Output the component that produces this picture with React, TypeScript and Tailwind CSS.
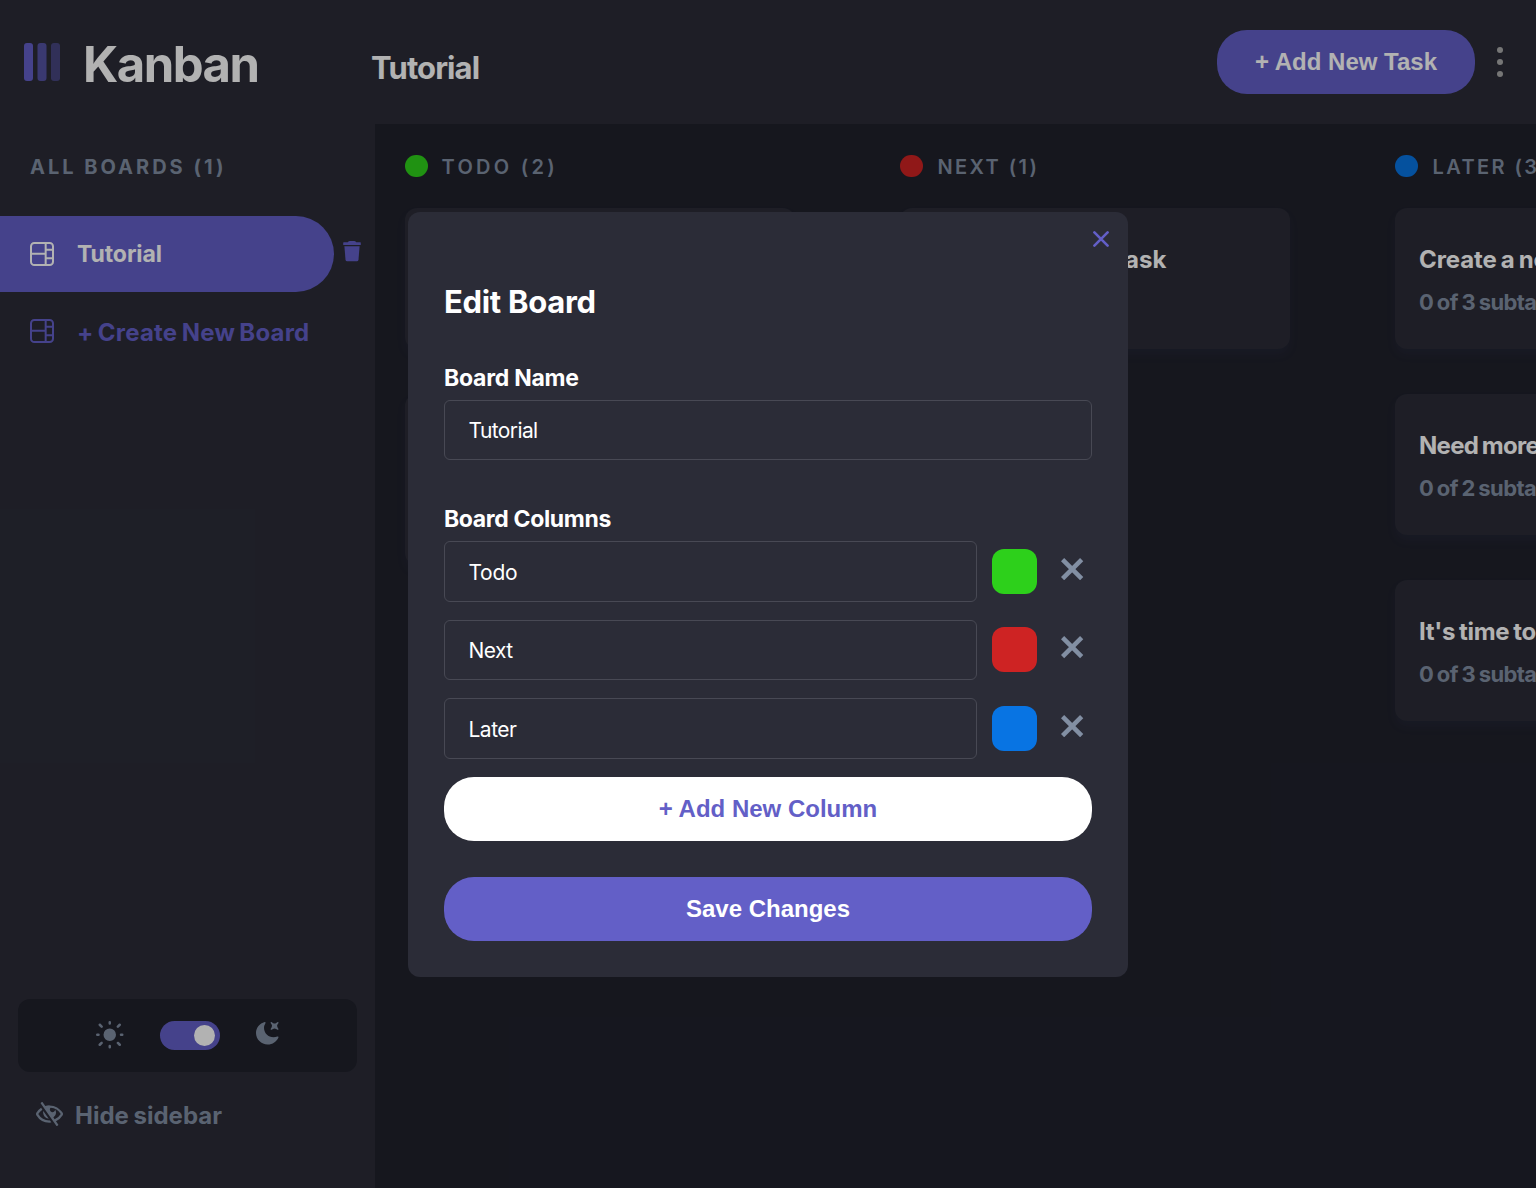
import type { ReactNode } from "react";

type Task = { title: string; subtasks: string; titleClass: string; tall?: boolean };
type Column = { name: string; nameClass: string; dot: string; tasks: Task[] };

const columns: Column[] = [
  {
    name: "TODO (2)",
    nameClass: "-ml-px tracking-[3.3px]",
    dot: "bg-[#2fd11a]",
    tasks: [
      { title: "Drag this task over", subtasks: "0 of 1 subtasks", titleClass: "" },
      { title: "Drag tasks to reorder them or change status", subtasks: "0 of 2 subtasks", titleClass: "", tall: true },
    ],
  },
  {
    name: "NEXT (1)",
    nameClass: "tracking-[2.4px]",
    dot: "bg-[#ce2323]",
    tasks: [{ title: "Finish your first task", subtasks: "0 of 2 subtasks", titleClass: "tracking-[0.15px]" }],
  },
  {
    name: "LATER (3)",
    nameClass: "tracking-[2.4px]",
    dot: "bg-[#0874e3]",
    tasks: [
      { title: "Create a new board", subtasks: "0 of 3 subtasks", titleClass: "tracking-[-0.1px] [word-spacing:-1.5px]" },
      { title: "Need more columns?", subtasks: "0 of 2 subtasks", titleClass: "tracking-[-0.7px] [word-spacing:-1.5px]" },
      { title: "It's time to start", subtasks: "0 of 3 subtasks", titleClass: "tracking-[-0.3px] [word-spacing:-1.5px]" },
    ],
  },
];

const fields = [
  { value: "Todo", color: "bg-[#2dd01b]", text: "tracking-[-0.3px]" },
  { value: "Next", color: "bg-[#ce2323]", text: "tracking-[-0.6px]" },
  { value: "Later", color: "bg-[#0874e3]", text: "tracking-[-0.5px]" },
];

function BoardIcon() {
  return (
    <svg className="h-6 w-6 shrink-0" viewBox="0 0 16 16" fill="currentColor">
      <path d="M0 2.889A2.889 2.889 0 0 1 2.889 0H13.11A2.889 2.889 0 0 1 16 2.889V13.11A2.888 2.888 0 0 1 13.111 16H2.89A2.889 2.889 0 0 1 0 13.111V2.89Zm1.333 5.555v4.667c0 .859.697 1.556 1.556 1.556h6.889V8.444H1.333Zm8.445-1.333V1.333h-6.89A1.556 1.556 0 0 0 1.334 2.89V7.11h8.445Zm4.889-1.333H11.11v4.444h3.556V5.778Zm0 5.778H11.11v3.11h2a1.556 1.556 0 0 0 1.556-1.555v-1.555Zm0-7.112V2.89a1.555 1.555 0 0 0-1.556-1.556h-2v3.111h3.556Z" />
    </svg>
  );
}

function TrashIcon() {
  return (
    <svg className="h-[21px] w-[18px]" viewBox="0 0 18 21" fill="currentColor">
      <path d="M.8 1.2H4.8Q5.6 0 6.8 0h4.4q1.2 0 2 1.2h4a.6.6 0 0 1 .6.6V3.9H.2V1.8a.6.6 0 0 1 .6-.6Z" />
      <path d="M1.4 5.2H16.6L15.5 18.7q-.2 1.6-1.7 1.6H4.2q-1.5 0-1.7-1.6Z" />
    </svg>
  );
}

function SunIcon() {
  return (
    <svg className="h-[28.5px] w-[28.5px]" viewBox="0 0 19 19" fill="currentColor">
      <path d="M9.167 15.833a.833.833 0 0 1 .833.834v.833a.833.833 0 0 1-1.667 0v-.833a.833.833 0 0 1 .834-.834ZM3.75 13.75a.833.833 0 0 1 .59 1.422l-1.25 1.25a.833.833 0 0 1-1.18-1.178l1.25-1.25a.833.833 0 0 1 .59-.244Zm10.833 0c.221 0 .433.088.59.244l1.25 1.25a.833.833 0 0 1-1.179 1.178l-1.25-1.25a.833.833 0 0 1 .59-1.422ZM9.167 5a4.167 4.167 0 1 1 0 8.334 4.167 4.167 0 0 1 0-8.334Zm-7.5 3.333a.833.833 0 0 1 0 1.667H.833a.833.833 0 1 1 0-1.667h.834Zm15.833 0a.833.833 0 0 1 0 1.667h-.833a.833.833 0 0 1 0-1.667h.833Zm-1.667-6.666a.833.833 0 0 1 .59 1.422l-1.25 1.25a.833.833 0 1 1-1.179-1.178l1.25-1.25a.833.833 0 0 1 .59-.244Zm-13.333 0c.221 0 .433.088.59.244l1.25 1.25a.833.833 0 0 1-1.18 1.178L1.91 3.09a.833.833 0 0 1 .59-1.422ZM9.167 0A.833.833 0 0 1 10 .833v.834a.833.833 0 1 1-1.667 0V.833A.833.833 0 0 1 9.167 0Z" />
    </svg>
  );
}

function MoonIcon() {
  return (
    <svg className="h-6 w-6" viewBox="0 0 16 16" fill="currentColor">
      <path d="M6.474.682c.434-.11.718.406.481.78A6.067 6.067 0 0 0 6.01 4.72c0 3.418 2.827 6.187 6.314 6.187.89.002 1.77-.182 2.584-.54.408-.18.894.165.724.57-1.16 2.775-3.944 4.73-7.194 4.73-4.292 0-7.771-3.41-7.771-7.615 0-3.541 2.466-6.518 5.807-7.37Zm8.433.07c.442-.294.969.232.674.674l-.525.787a1.943 1.943 0 0 0 0 2.157l.525.788c.295.441-.232.968-.674.673l-.787-.525a1.943 1.943 0 0 0-2.157 0l-.786.525c-.442.295-.97-.232-.675-.673l.525-.788a1.943 1.943 0 0 0 0-2.157l-.525-.787c-.295-.442.232-.968.674-.673l.787.525a1.943 1.943 0 0 0 2.157 0l.787-.526Z" />
    </svg>
  );
}

function HideIcon() {
  return (
    <svg className="h-6 w-[27px]" viewBox="0 0 18 16" fill="currentColor">
      <path d="M8.522 11.223a4.252 4.252 0 0 1-3.654-5.22l3.654 5.22ZM9 12.25A8.685 8.685 0 0 1 1.5 8a8.612 8.612 0 0 1 2.76-2.864l-.86-1.23A10.112 10.112 0 0 0 .208 7.238a1.5 1.5 0 0 0 0 1.524A10.187 10.187 0 0 0 9 13.75c.414 0 .828-.025 1.239-.074l-1-1.43A8.88 8.88 0 0 1 9 12.25Zm8.792-3.488a10.14 10.14 0 0 1-4.486 4.046l1.504 2.148a.375.375 0 0 1-.092.523l-.648.453a.375.375 0 0 1-.523-.092L3.19 1.044A.375.375 0 0 1 3.282.52L3.93.068a.375.375 0 0 1 .523.092l1.735 2.479A9.845 9.845 0 0 1 9 2.25c3.678 0 6.945 1.993 8.792 4.988a1.5 1.5 0 0 1 0 1.524ZM16.5 8a8.674 8.674 0 0 0-6.755-4.219A1.75 1.75 0 1 0 12.75 5v-.001a4.25 4.25 0 0 1-1.154 5.366l.834 1.192A8.641 8.641 0 0 0 16.5 8Z" />
    </svg>
  );
}

function CrossIcon() {
  return (
    <svg className="h-[22.5px] w-[22.5px]" viewBox="0 0 15 15" fill="currentColor">
      <path d="m12.728 0 2.122 2.122L2.122 14.85 0 12.728z" />
      <path d="M0 2.122 2.122 0 14.85 12.728l-2.122 2.122z" />
    </svg>
  );
}

function Header() {
  return (
    <header className="flex h-[124px] shrink-0 items-start bg-[#2b2c37] text-white">
      <div className="flex w-[371px] shrink-0 pl-6">
        <svg className="mt-[43px] h-[38px] w-9" viewBox="0 0 24 25" fill="#635fc7" preserveAspectRatio="none">
          <rect width="6" height="25" rx="2" />
          <rect opacity=".75" x="9" width="6" height="25" rx="2" />
          <rect opacity=".5" x="18" width="6" height="25" rx="2" />
        </svg>
        <span className="mt-9 ml-[23px] text-[49px] leading-[58px] font-bold tracking-[-1.5px]">Kanban</span>
      </div>
      <h1 className="mt-12 text-[31px] leading-10 font-bold tracking-[-0.9px]">Tutorial</h1>
      <button className="mt-[30px] ml-auto h-16 w-[258px] rounded-[30px] bg-[#635fc7] font-['Liberation_Sans',sans-serif] text-2xl font-bold">
        + Add New Task
      </button>
      <svg className="mt-[47px] mr-[33px] ml-[22px] h-[30px] w-1.5" viewBox="0 0 6 30" fill="#aaaaaa">
        <circle cx="3" cy="3" r="3" />
        <circle cx="3" cy="15" r="3" />
        <circle cx="3" cy="27" r="3" />
      </svg>
    </header>
  );
}

function Sidebar() {
  return (
    <aside className="flex w-[375px] shrink-0 flex-col bg-[#2b2c37] text-[#828fa3]">
      <h2 className="mt-7 pl-[30px] text-xl leading-[30px] font-bold tracking-[3px]">ALL BOARDS (1)</h2>
      <div className="mt-[34px] flex items-start">
        <div className="flex h-[76px] w-[334px] items-center gap-[23px] rounded-r-[38px] bg-[#635fc7] pl-[30px] text-white">
          <BoardIcon />
          <span className="text-[23px] font-bold tracking-[-0.1px]">Tutorial</span>
        </div>
        <div className="mt-[25px] ml-[9px] text-[#635fc7]">
          <TrashIcon />
        </div>
      </div>
      <div className="mt-1 flex h-[72px] items-center gap-[23px] pl-[30px] text-[#635fc7]">
        <div className="-mt-[2px]">
          <BoardIcon />
        </div>
        <span className="mt-px text-[24px] font-bold tracking-[0.2px] [word-spacing:-1.5px]">+ Create New Board</span>
      </div>
      <div className="mx-[18px] mt-auto flex h-[73px] rounded-xl bg-[#20212c]">
        <div className="mt-[22px] ml-[78px]">
          <SunIcon />
        </div>
        <div className="mt-[22px] ml-[35.5px] flex h-[29px] w-[60px] items-center justify-end rounded-full bg-[#635fc7] pr-[5px]">
          <div className="h-[21px] w-[21px] rounded-full bg-white" />
        </div>
        <div className="mt-[22px] ml-[35px]">
          <MoonIcon />
        </div>
      </div>
      <div className="mt-[25px] mb-[55px] flex h-9 items-center gap-3 pl-9">
        <div className="-mt-[2px]">
          <HideIcon />
        </div>
        <span className="mt-px text-[24px] font-bold [word-spacing:-1px]">Hide sidebar</span>
      </div>
    </aside>
  );
}

function TaskCard({ task }: { task: Task }) {
  return (
    <article
      className={`${task.tall ? "h-[171px]" : "h-[141px]"} rounded-xl bg-[#2b2c37] px-6 pt-[37px] shadow-[0_6px_9px_rgba(54,78,126,0.1)]`}
    >
      <h3 className={`text-[24px] leading-[30px] font-bold text-white ${task.titleClass}`}>{task.title}</h3>
      <p className="mt-[11px] text-[22px] leading-[32px] font-bold tracking-[-0.6px] text-[#828fa3] [word-spacing:-1px]">
        {task.subtasks}
      </p>
    </article>
  );
}

function Board() {
  return (
    <main className="flex min-w-0 flex-1 gap-[105px] overflow-hidden bg-[#20212c] pl-[30px]">
      {columns.map((column) => (
        <section key={column.name} className="w-[390px] shrink-0">
          <div className="mt-7 flex h-[30px] items-center gap-[15px]">
            <span className={`-mt-[2px] h-[22.5px] w-[22.5px] rounded-full ${column.dot}`} />
            <h2 className={`text-xl font-semibold text-[#828fa3] ${column.nameClass}`}>{column.name}</h2>
          </div>
          <div className="mt-[26px] flex flex-col gap-[45px]">
            {column.tasks.map((task) => (
              <TaskCard key={task.title} task={task} />
            ))}
          </div>
        </section>
      ))}
    </main>
  );
}

function Label({ children, className }: { children: ReactNode; className: string }) {
  return <div className={`text-[23px] leading-[30px] font-bold ${className}`}>{children}</div>;
}

function EditBoardDialog() {
  return (
    <div className="flex h-[765px] w-[720px] flex-col rounded-xl bg-[#2b2c37] px-9 text-white">
      <button className="mt-[19px] -mr-[17px] self-end text-[#635fc7]">
        <svg className="h-4 w-4" viewBox="0 0 16 16" fill="none" stroke="currentColor" strokeWidth="2.6" strokeLinecap="round">
          <path d="M1.4 1.4l13.2 13.2M14.6 1.4 1.4 14.6" />
        </svg>
      </button>
      <h2 className="mt-[35px] text-[31px] leading-10 font-bold tracking-[-0.3px]">Edit Board</h2>
      <Label className="mt-[41px] tracking-[-0.25px]">Board Name</Label>
      <div className="mt-[7px] flex h-[60px] items-center rounded-md border border-[#484954] pt-0.5 pl-[23.5px] text-[21px] tracking-[-0.6px]">
        Tutorial
      </div>
      <Label className="mt-11 tracking-[-0.35px]">Board Columns</Label>
      <div className="mt-[7.5px] flex flex-col gap-[18px]">
        {fields.map((field) => (
          <div key={field.value} className="flex h-[60.5px]">
            <div className={`flex w-[533px] items-center rounded-md border border-[#484954] pt-0.5 pl-[23.5px] text-[21px] ${field.text}`}>
              {field.value}
            </div>
            <div className={`mt-[7.5px] ml-[15px] h-[45px] w-[45px] rounded-xl ${field.color}`} />
            <div className="mt-[16.5px] ml-6 text-[#828fa3]">
              <CrossIcon />
            </div>
          </div>
        ))}
      </div>
      <button className="mt-[18px] h-16 shrink-0 rounded-[30px] bg-white font-['Liberation_Sans',sans-serif] text-2xl font-bold text-[#635fc7]">
        + Add New Column
      </button>
      <button className="mt-9 h-16 shrink-0 rounded-[30px] bg-[#635fc7] font-['Liberation_Sans',sans-serif] text-2xl font-bold">
        Save Changes
      </button>
    </div>
  );
}

export default function App() {
  return (
    <div className="relative flex h-[1188px] w-[1536px] flex-col overflow-hidden font-['Inter',sans-serif]">
      <Header />
      <div className="flex min-h-0 flex-1">
        <Sidebar />
        <Board />
      </div>
      <div className="absolute inset-0 flex items-center justify-center bg-black/30">
        <EditBoardDialog />
      </div>
    </div>
  );
}
